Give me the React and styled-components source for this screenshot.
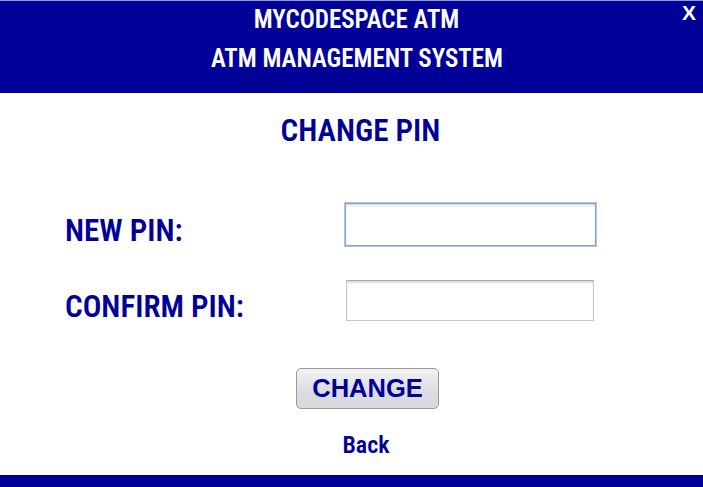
import React from "react";
import styled, { createGlobalStyle } from "styled-components";

const Global = createGlobalStyle`
  html, body { margin: 0; padding: 0; background: #fff; }
  body { width: 703px; height: 487px; overflow: hidden; font-family: Roboto, "Open Sans", sans-serif; }
`;

const Page = styled.div`
  width: 703px;
  height: 487px;
  display: flex;
  flex-direction: column;
`;

const Header = styled.header`
  position: relative;
  height: 93px;
  background: #000099;
  border-top: 1px solid #8f9fc9;
  box-sizing: border-box;
  display: flex;
  flex-direction: column;
  align-items: center;
  color: #fff;
  font-weight: 600;
  font-stretch: 87.5%;
`;

const HeaderLine = styled.div`
  font-size: ${(p) => p.$size}px;
  line-height: 1;
  margin-top: ${(p) => p.$top}px;
  padding-left: ${(p) => p.$shift || 0}px;
`;

const Close = styled.button`
  position: absolute;
  top: 1px;
  right: 7px;
  background: none;
  border: 0;
  padding: 0;
  color: #fff;
  font-family: "Liberation Sans", Arial, sans-serif;
  font-weight: 700;
  font-size: 21px;
  line-height: 1;
  cursor: pointer;
`;

const Main = styled.main`
  flex: 1;
  display: flex;
  flex-direction: column;
  color: #000099;
  font-weight: 600;
  font-stretch: 87.5%;
`;

const Title = styled.h1`
  margin: 22px 0 0 0;
  padding-left: 18px;
  text-align: center;
  font-size: 31px;
  font-weight: 600;
  line-height: 1;
`;

const Form = styled.div`
  display: grid;
  grid-template-columns: 280px 251px;
  row-gap: 33px;
  margin: 57px 0 0 65px;
  align-items: center;
`;

const Label = styled.label`
  font-size: 31px;
  line-height: 1;
  padding-top: 12px;
`;

const Input = styled.input`
  box-sizing: border-box;
  width: ${(p) => p.$w}px;
  height: ${(p) => p.$h}px;
  margin-left: ${(p) => p.$ml || 0}px;
  border: 1px solid ${(p) => (p.$focus ? "#7fa6d6" : "#c8c8c8")};
  border-top-color: ${(p) => (p.$focus ? "#7fa6d6" : "#a8a8a8")};
  box-shadow: ${(p) =>
    p.$focus
      ? "0 0 0 1px #a9c5e8, inset 0 2px 2px #e0e0e0"
      : "inset 0 2px 2px #dcdcdc"};
  background: #fff;
  outline: none;
`;

const Actions = styled.div`
  display: flex;
  flex-direction: column;
  align-items: center;
  padding-left: 32px;
  margin-top: 46px;
`;

const ChangeButton = styled.button`
  width: 143px;
  height: 41px;
  box-sizing: border-box;
  border: 1px solid #9a9a9a;
  border-radius: 5px;
  background: linear-gradient(#f4f4f6, #dcdde2 55%, #d8d9de);
  color: #000099;
  font-family: "Liberation Sans", Arial, sans-serif;
  font-weight: 700;
  font-size: 25.5px;
  font-stretch: 100%;
  padding: 0;
  line-height: 1;
`;

const BackLink = styled.a`
  margin-top: 24px;
  margin-right: 3px;
  font-size: 24px;
  line-height: 1;
  color: #000099;
  text-decoration: none;
  cursor: pointer;
`;

const Footer = styled.footer`
  height: 12px;
  background: #000099;
`;

export default function App() {
  return (
    <>
      <Global />
      <Page>
        <Header>
          <HeaderLine $size={25} $top={6} $shift={10}>MYCODESPACE ATM</HeaderLine>
          <HeaderLine $size={25} $top={14} $shift={11}>ATM MANAGEMENT SYSTEM</HeaderLine>
          <Close aria-label="close">X</Close>
        </Header>
        <Main>
          <Title>CHANGE PIN</Title>
          <Form>
            <Label>NEW PIN:</Label>
            <Input $w={251} $h={43} $focus type="password" />
            <Label>CONFIRM PIN:</Label>
            <Input $w={248} $h={41} $ml={1} type="password" />
          </Form>
          <Actions>
            <ChangeButton>CHANGE</ChangeButton>
            <BackLink>Back</BackLink>
          </Actions>
        </Main>
        <Footer />
      </Page>
    </>
  );
}
